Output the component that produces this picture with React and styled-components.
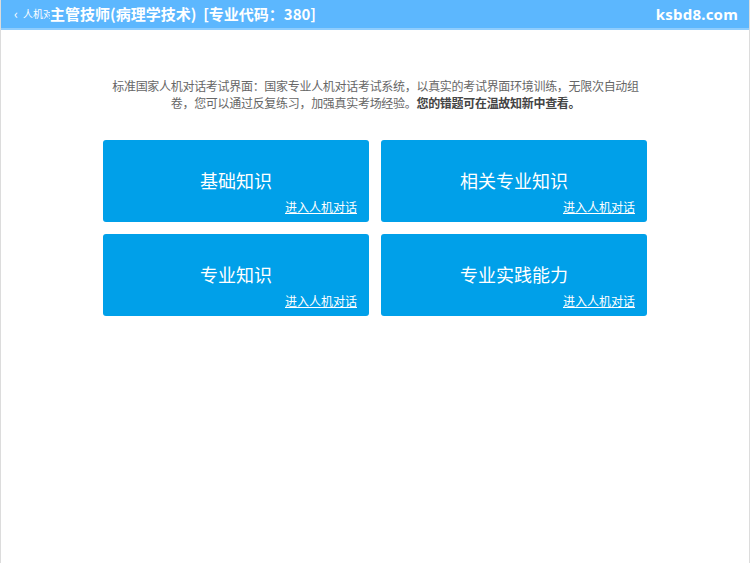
import React from "react";
import styled, { createGlobalStyle } from "styled-components";

const Global = createGlobalStyle`
  html, body { margin: 0; padding: 0; background: #fff; }
  body { font-family: "Microsoft YaHei", "Noto Sans CJK SC", "Liberation Sans", sans-serif; }
  * { box-sizing: border-box; }
`;

const Page = styled.div`
  width: 750px;
  height: 563px;
  border-left: 1px solid #dcdcdc;
  border-right: 1px solid #dcdcdc;
  display: flex;
  flex-direction: column;
`;

const Header = styled.header`
  position: relative;
  height: 30px;
  background: #5cb7fe;
  border-bottom: 2px solid #8fcdfd;
  display: flex;
  align-items: center;
  justify-content: space-between;
  padding: 0 11px 0 49px;
  color: #fff;
`;

const Back = styled.a`
  position: absolute;
  left: 13px;
  top: 8px;
  font-size: 10px;
  line-height: 12px;
  color: #fff;
  text-decoration: none;
  display: flex;
  align-items: center;
  gap: 5px;
`;

const Arrow = styled.span`
  font-size: 13px;
`;

const Title = styled.h1`
  position: relative;
  margin: 0;
  font-size: 15px;
  font-weight: bold;
  white-space: pre;
  line-height: 26px;
  background: #5cb7fe;
`;

const Brand = styled.span`
  font-family: "Noto Sans", "DejaVu Sans", sans-serif;
  font-size: 15px;
  font-weight: bold;
  letter-spacing: 0.2px;
`;

const Main = styled.main`
  width: 545px;
  margin: 47px 0 0 102px;
  display: flex;
  flex-direction: column;
  gap: 29px;
`;

const Intro = styled.p`
  margin: 0;
  font-size: 12px;
  line-height: 17px;
  color: #666;
  text-align: center;
  letter-spacing: -0.3px;
  b { color: #444; }
`;

const Grid = styled.div`
  display: grid;
  grid-template-columns: 266px 266px;
  column-gap: 12px;
  row-gap: 12px;
`;

const Card = styled.div`
  height: 82px;
  background: #00a0e9;
  border-radius: 3px;
  color: #fff;
  display: flex;
  flex-direction: column;
  align-items: center;
  padding: 27px 12px 0;
`;

const CardTitle = styled.div`
  font-size: 18px;
  line-height: 26px;
`;

const Enter = styled.a`
  align-self: flex-end;
  margin-top: 6px;
  font-size: 12px;
  line-height: 16px;
  color: #fff;
  text-decoration: underline;
`;

const items = ["基础知识", "相关专业知识", "专业知识", "专业实践能力"];

export default function App() {
  return (
    <>
      <Global />
      <Page>
        <Header>
          <Back>
            <Arrow>‹</Arrow>
            <span>人机对话</span>
          </Back>
          <Title>{"主管技师(病理学技术)  [专业代码：380]"}</Title>
          <Brand>ksbd8.com</Brand>
        </Header>
        <Main>
          <Intro>
            标准国家人机对话考试界面：国家专业人机对话考试系统，以真实的考试界面环境训练，无限次自动组卷，您可以通过反复练习，加强真实考场经验。
            <b>您的错题可在温故知新中查看。</b>
          </Intro>
          <Grid>
            {items.map((t) => (
              <Card key={t}>
                <CardTitle>{t}</CardTitle>
                <Enter>进入人机对话</Enter>
              </Card>
            ))}
          </Grid>
        </Main>
      </Page>
    </>
  );
}
